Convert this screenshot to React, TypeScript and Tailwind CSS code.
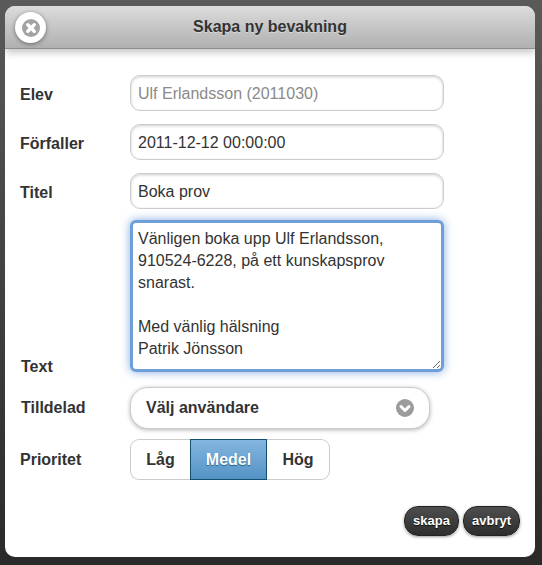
import React from 'react';

const inputClass =
  "h-[36px] w-[314px] rounded-[10px] border border-[#cccccc] bg-white pt-[2px] pr-[8px] pl-[7px] text-[16px] shadow-[inset_0_1px_3px_rgba(0,0,0,0.2)] outline-none";

function Label({ children, className = "" }: { children: React.ReactNode; className?: string }) {
  return <div className={"w-[110px] shrink-0 text-[16px] font-bold text-[#333333] " + className}>{children}</div>;
}

function CloseIcon() {
  return (
    <span className="flex h-[31px] w-[31px] items-center justify-center rounded-full bg-white shadow-[0_1px_4px_rgba(0,0,0,0.45)]">
      <svg width="18" height="18" viewBox="0 0 18 18">
        <circle cx="9" cy="9" r="9" fill="#a3a3a3" />
        <path d="M5.8 5.8 L12.2 12.2 M12.2 5.8 L5.8 12.2" stroke="#fff" strokeWidth="3.4" strokeLinecap="round" />
      </svg>
    </span>
  );
}

export default function App() {
  return (
    <div
      className="h-[565px] w-[542px] overflow-hidden bg-gradient-to-b from-[#5a5a5a] to-[#2a2a2a] pt-[6px] pr-[7px] pl-[5px]"
      style={{ fontFamily: '"Liberation Sans", Arial, sans-serif' }}
    >
      <div className="h-[551px] overflow-hidden rounded-[10px] bg-white">
        {/* Header */}
        <div className="relative flex h-[43px] items-center justify-center border-b border-[#8f8f8f] bg-gradient-to-b from-[#dcdcdc] to-[#b0b0b0] shadow-[0_3px_8px_rgba(0,0,0,0.25)]">
          <span className="absolute top-[6px] left-[10px]">
            <CloseIcon />
          </span>
          <span className="text-[16px] font-bold text-[#333333] [text-shadow:0_1px_0_rgba(255,255,255,0.4)]">
            Skapa ny bevakning
          </span>
        </div>

        <div className="flex flex-col pt-[26px] pl-[15px]">
          <div className="flex items-center">
            <Label className="pt-[4px]">Elev</Label>
            <input readOnly value="Ulf Erlandsson (2011030)" className={inputClass + " text-[#8a8a8a]"} />
          </div>
          <div className="mt-[13px] flex items-center">
            <Label className="pt-[4px]">Förfaller</Label>
            <input readOnly value="2011-12-12 00:00:00" className={inputClass + " text-[#333333]"} />
          </div>
          <div className="mt-[13px] flex items-center">
            <Label className="pt-[4px]">Titel</Label>
            <input readOnly value="Boka prov" className={inputClass + " text-[#333333]"} />
          </div>
          <div className="mt-[11px] flex items-end">
            <Label className="-mb-[7px] pl-[1px]">Text</Label>
            <textarea
              readOnly
              value={"Vänligen boka upp Ulf Erlandsson,\n910524-6228, på ett kunskapsprov\nsnarast.\n\nMed vänlig hälsning\nPatrik Jönsson"}
              className="h-[152px] w-[314px] rounded-[6px] border-[3px] border-[#6f9fd8] bg-white pt-[5px] pr-[6px] pb-[5px] pl-[5px] text-[16px] leading-[22px] text-[#333333] shadow-[0_0_10px_rgba(88,144,214,0.75)] outline-none"
            />
          </div>
          <div className="mt-[15px] flex items-center">
            <Label className="pl-[1px]">Tilldelad</Label>
            <div className="flex h-[42px] w-[300px] items-center justify-between rounded-[18px] border border-[#cccccc] bg-white pr-[15px] pl-[15px] shadow-[0_1px_4px_rgba(0,0,0,0.3)]">
              <span className="text-[16px] font-bold text-[#333333]">Välj användare</span>
              <svg width="18" height="18" viewBox="0 0 18 18">
                <circle cx="9" cy="9" r="9" fill="#9c9c9c" />
                <path d="M5 7.5 L9 11.5 L13 7.5" fill="none" stroke="#fff" strokeWidth="3" strokeLinecap="round" strokeLinejoin="round" />
              </svg>
            </div>
          </div>
          <div className="mt-[10px] flex items-center">
            <Label>Prioritet</Label>
            <div className="flex h-[41px] text-[16px] font-bold">
              <div className="flex w-[60px] items-center justify-center rounded-l-[9px] border border-r-0 border-[#cccccc] bg-white text-[#333333]">Låg</div>
              <div className="flex w-[77px] items-center justify-center border border-[#145072] bg-gradient-to-b from-[#85b6e0] to-[#5393c5] text-white [text-shadow:0_1px_1px_rgba(20,80,114,0.8)]">Medel</div>
              <div className="flex w-[63px] items-center justify-center rounded-r-[9px] border border-l-0 border-[#cccccc] bg-white text-[#333333]">Hög</div>
            </div>
          </div>
          <div className="mt-[26px] flex justify-end gap-[4px] pr-[15px]">
            <button className="h-[30px] w-[55px] rounded-[14px] border border-[#222222] bg-gradient-to-b from-[#4e4e4e] to-[#2e2e2e] text-[13px] font-bold text-white shadow-[0_1px_3px_rgba(0,0,0,0.4)] [text-shadow:0_1px_1px_rgba(0,0,0,0.8)]">skapa</button>
            <button className="h-[30px] w-[57px] rounded-[14px] border border-[#222222] bg-gradient-to-b from-[#4e4e4e] to-[#2e2e2e] text-[13px] font-bold text-white shadow-[0_1px_3px_rgba(0,0,0,0.4)] [text-shadow:0_1px_1px_rgba(0,0,0,0.8)]">avbryt</button>
          </div>
        </div>
      </div>
    </div>
  );
}
